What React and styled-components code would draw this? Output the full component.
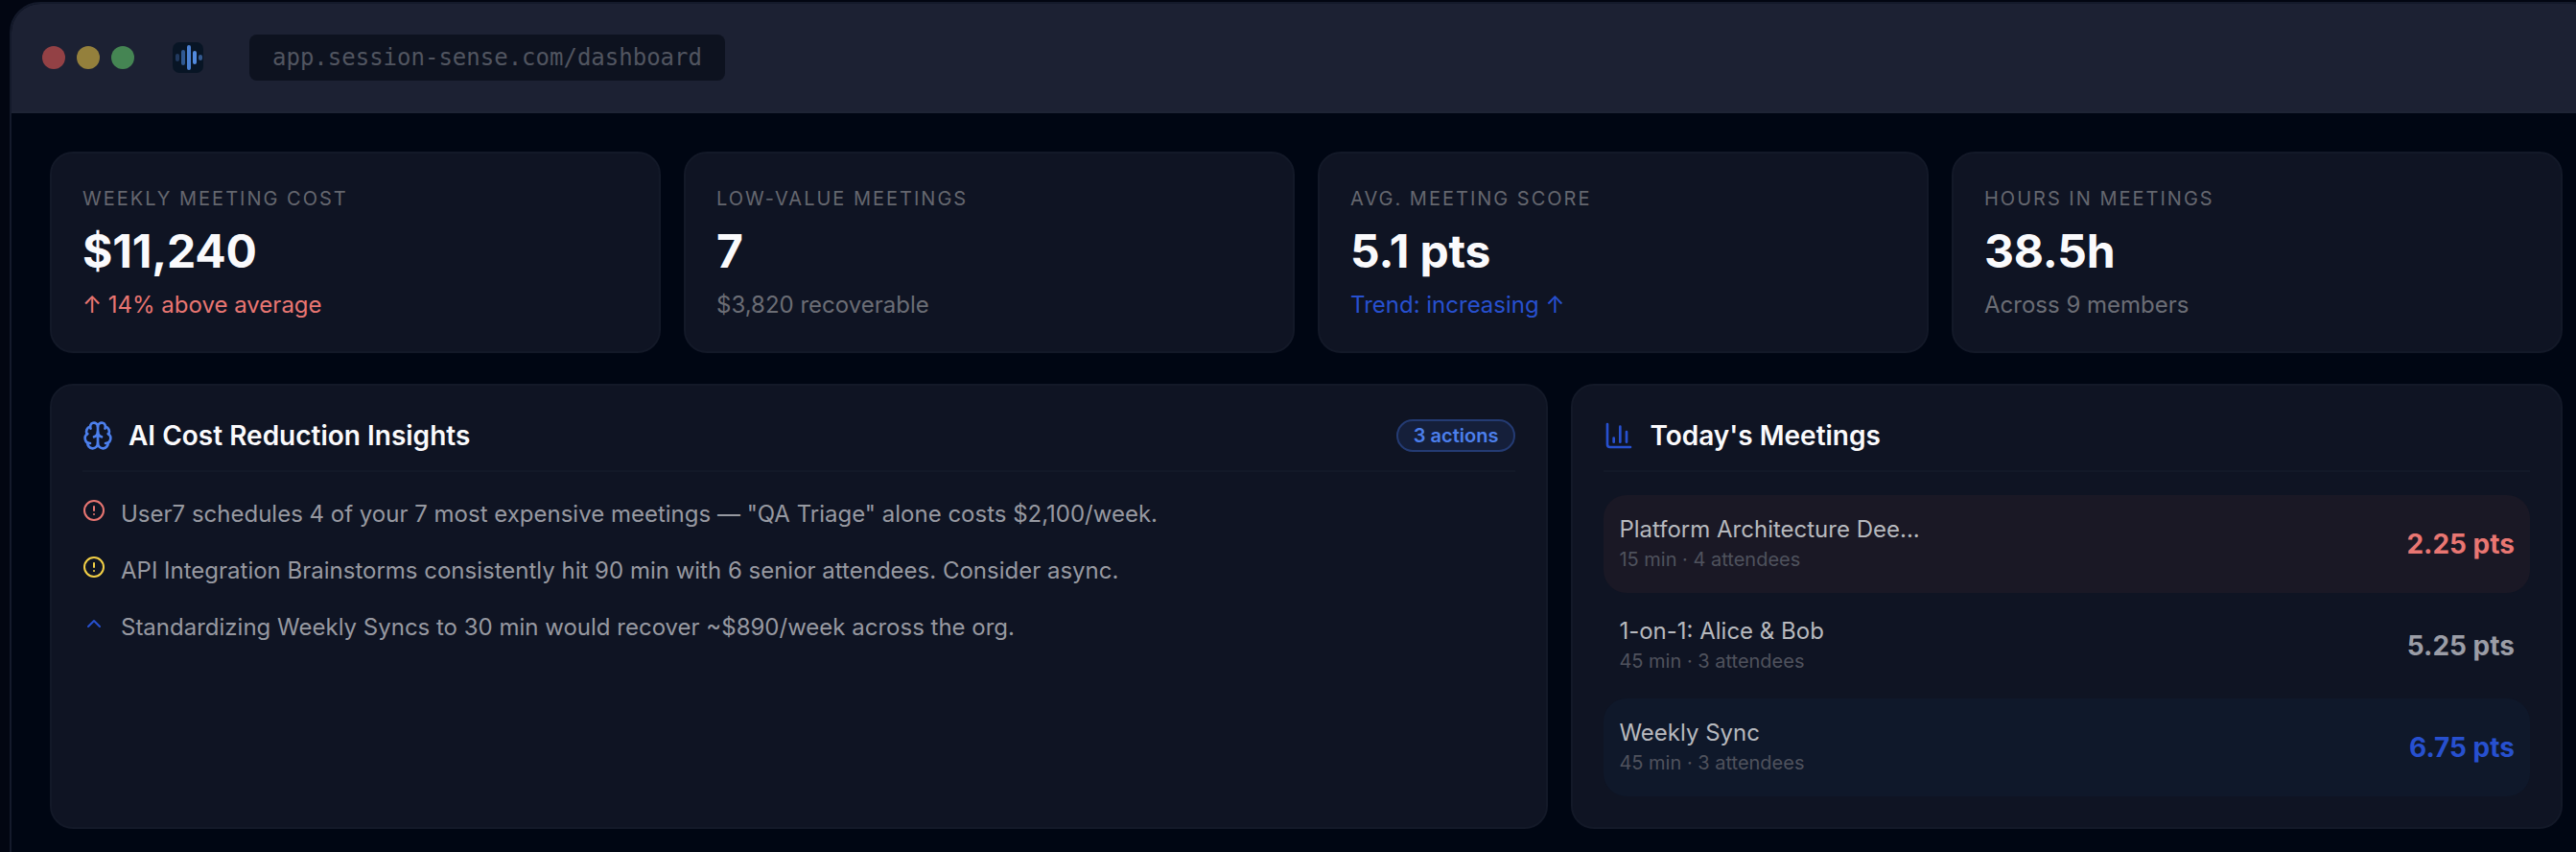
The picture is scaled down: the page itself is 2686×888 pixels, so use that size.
import React from "react";
import styled, { createGlobalStyle } from "styled-components";
import { Brain, ChartColumn, ChevronUp, CircleAlert } from "lucide-react";

const GlobalStyle = createGlobalStyle`
    * {
        box-sizing: border-box;
    }

    body {
        margin: 0;
        background: #020612;
        font-family: Inter, sans-serif;
        overflow: hidden;
    }
`;

const Page = styled.div`
    height: 888px;
    padding: 2px 0 0 10px;
    overflow: hidden;
`;

const BrowserWindow = styled.div`
    width: 2704px;
    height: 960px;
    border: 2px solid #141a2b;
    border-radius: 32px;
    background: #000613;
    overflow: hidden;
`;

const TitleBar = styled.div`
    display: flex;
    align-items: center;
    height: 114px;
    padding: 0 32px;
    background: #1c2133;
    border-bottom: 2px solid #1e2435;
`;

const Dots = styled.div`
    display: flex;
    gap: 12px;
`;

const Dot = styled.span`
    width: 24px;
    height: 24px;
    border-radius: 50%;
    background: ${(props) => props.$color};
`;

const Logo = styled.svg`
    width: 32px;
    height: 32px;
    margin: 0 48px 0 40px;
`;

const AddressBar = styled.div`
    height: 48px;
    padding: 0 24px;
    border-radius: 8px;
    background: #0d121f;
    color: #515560;
    font-family: "DejaVu Sans Mono", monospace;
    font-size: 24px;
    line-height: 48px;
`;

const Content = styled.div`
    display: flex;
    flex-direction: column;
    gap: 32px;
    width: 2700px;
    padding: 40px;
`;

const StatGrid = styled.div`
    display: grid;
    grid-template-columns: repeat(4, 1fr);
    gap: 24px;
`;

const PanelGrid = styled.div`
    display: grid;
    grid-template-columns: repeat(5, 1fr);
    gap: 24px;
`;

const Card = styled.div`
    padding: 32px;
    border: 2px solid #131928;
    border-radius: 24px;
    background: #0f1423;
`;

const StatCard = styled(Card)`
    height: 210px;
`;

const Panel = styled(Card)`
    grid-column: span ${(props) => props.$span};
    height: 464px;
`;

const StatLabel = styled.div`
    color: #65676f;
    font-size: 20px;
    line-height: 30px;
    letter-spacing: 2px;
    text-transform: uppercase;
`;

const StatValue = styled.div`
    margin-top: 10px;
    color: #fafafc;
    font-size: 48px;
    font-weight: 700;
    line-height: 60px;
    letter-spacing: -0.2px;
`;

const StatNote = styled.div`
    margin-top: 8px;
    color: ${(props) => props.$color};
    font-size: 24px;
    line-height: 36px;
`;

const PanelHeader = styled.div`
    display: flex;
    align-items: center;
    gap: 16px;
    height: 58px;
    padding-bottom: 16px;
    margin-bottom: 24px;
    border-bottom: 2px solid #131928;
`;

const PanelTitle = styled.h3`
    flex: 1;
    margin: 0;
    color: #fafafc;
    font-size: 28px;
    font-weight: 600;
    line-height: 40px;
`;

const Badge = styled.span`
    height: 34px;
    padding: 0 16px;
    border: 2px solid #243b73;
    border-radius: 17px;
    background: #151f3a;
    color: #4c7fec;
    font-size: 20px;
    font-weight: 600;
    line-height: 30px;
`;

const InsightList = styled.div`
    display: flex;
    flex-direction: column;
    gap: 20px;
`;

const Insight = styled.div`
    display: flex;
    gap: 16px;
    color: #9799a1;
    font-size: 24px;
    line-height: 39px;

    svg {
        margin-top: 4px;
    }
`;

const MeetingList = styled.div`
    display: flex;
    flex-direction: column;
    gap: 4px;
`;

const Meeting = styled.div`
    display: flex;
    align-items: center;
    justify-content: space-between;
    height: 102px;
    padding: 0 16px;
    border-radius: 24px;
    background: ${(props) => props.$background};
`;

const MeetingName = styled.div`
    color: #b7b9be;
    font-size: 24px;
    line-height: 32px;
`;

const MeetingMeta = styled.div`
    color: #4f525d;
    font-size: 20px;
    line-height: 30px;
`;

const Score = styled.div`
    color: ${(props) => props.$color};
    font-size: 28px;
    font-weight: 700;
`;

const stats = [
    { label: "Weekly Meeting Cost", value: "$11,240", note: "↑ 14% above average", color: "#e97672" },
    { label: "Low-Value Meetings", value: "7", note: "$3,820 recoverable", color: "#6b6d75" },
    { label: "Avg. Meeting Score", value: "5.1 pts", note: "Trend: increasing ↑", color: "#2750cf" },
    { label: "Hours in Meetings", value: "38.5h", note: "Across 9 members", color: "#6b6d75" },
];

const insights = [
    {
        icon: CircleAlert,
        color: "#e97672",
        text: 'User7 schedules 4 of your 7 most expensive meetings — "QA Triage" alone costs $2,100/week.',
    },
    {
        icon: CircleAlert,
        color: "#f3d046",
        text: "API Integration Brainstorms consistently hit 90 min with 6 senior attendees. Consider async.",
    },
    {
        icon: ChevronUp,
        color: "#2750cf",
        text: "Standardizing Weekly Syncs to 30 min would recover ~$890/week across the org.",
    },
];

const meetings = [
    {
        name: "Platform Architecture Dee...",
        meta: "15 min · 4 attendees",
        score: "2.25 pts",
        color: "#e97672",
        background: "#1a1825",
    },
    {
        name: "1-on-1: Alice & Bob",
        meta: "45 min · 3 attendees",
        score: "5.25 pts",
        color: "#9b9da6",
        background: "transparent",
    },
    {
        name: "Weekly Sync",
        meta: "45 min · 3 attendees",
        score: "6.75 pts",
        color: "#2750cf",
        background: "#0f182a",
    },
];

function SoundLogo() {
    return <Logo viewBox="0 0 32 32">
            <rect width="32" height="32" rx="7" fill="#081525" />
            <rect x="3" y="12" width="4" height="8" rx="2" fill="#21395f" />
            <rect x="9" y="8" width="4" height="16" rx="2" fill="#305993" />
            <rect x="15" y="3" width="4" height="26" rx="2" fill="#4a80d2" />
            <rect x="21" y="9" width="4" height="14" rx="2" fill="#528bdf" />
            <rect x="27" y="13" width="4" height="6" rx="2" fill="#34598f" />
        </Logo>
}

function App() {
    return <Page>
            <GlobalStyle />
            <BrowserWindow>
                <TitleBar>
                    <Dots>
                        <Dot $color="#934145" />
                        <Dot $color="#94803c" />
                        <Dot $color="#458553" />
                    </Dots>
                    <SoundLogo />
                    <AddressBar>app.session-sense.com/dashboard</AddressBar>
                </TitleBar>
                <Content>
                    <StatGrid>
                        {stats.map((stat) => (
                            <StatCard key={stat.label}>
                                <StatLabel>{stat.label}</StatLabel>
                                <StatValue>{stat.value}</StatValue>
                                <StatNote $color={stat.color}>{stat.note}</StatNote>
                            </StatCard>
                        ))}
                    </StatGrid>
                    <PanelGrid>
                        <Panel $span={3}>
                            <PanelHeader>
                                <Brain size={32} color="#4c7fec" />
                                <PanelTitle>AI Cost Reduction Insights</PanelTitle>
                                <Badge>3 actions</Badge>
                            </PanelHeader>
                            <InsightList>
                                {insights.map(({ icon: Icon, color, text }) => (
                                    <Insight key={text}>
                                        <Icon size={24} color={color} />
                                        <span>{text}</span>
                                    </Insight>
                                ))}
                            </InsightList>
                        </Panel>
                        <Panel $span={2}>
                            <PanelHeader>
                                <ChartColumn size={32} color="#2750cf" />
                                <PanelTitle>Today's Meetings</PanelTitle>
                            </PanelHeader>
                            <MeetingList>
                                {meetings.map((meeting) => (
                                    <Meeting key={meeting.name} $background={meeting.background}>
                                        <div>
                                            <MeetingName>{meeting.name}</MeetingName>
                                            <MeetingMeta>{meeting.meta}</MeetingMeta>
                                        </div>
                                        <Score $color={meeting.color}>{meeting.score}</Score>
                                    </Meeting>
                                ))}
                            </MeetingList>
                        </Panel>
                    </PanelGrid>
                </Content>
            </BrowserWindow>
        </Page>
}

export default App;
